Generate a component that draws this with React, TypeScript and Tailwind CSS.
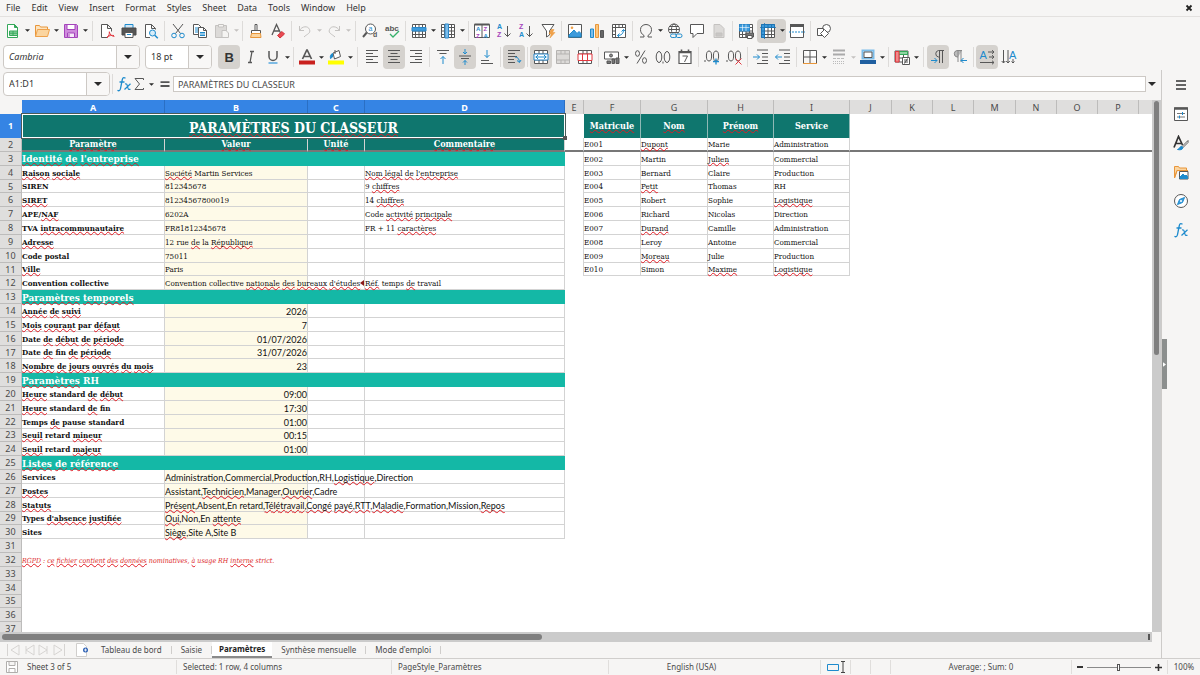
import React from "react";

const INK = "#575757";
const BLUE = "#1e8bcd";
const FAINT = "#c4c2c0";

/* ---------- icons, all drawn on a 16 x 16 grid ---------- */

const Svg = ({ children }: { children: React.ReactNode }) => (
  <svg viewBox="0 0 16 16" className="w-4 h-4 shrink-0" fill="none" stroke={INK} strokeWidth="1" aria-hidden="true">
    {children}
  </svg>
);

const Letter = ({ x, y, size, fill, bold, children }: { x: number; y: number; size: number; fill: string; bold?: boolean; children: string }) => (
  <text x={x} y={y} fontSize={size} fill={fill} stroke="none" fontFamily="Liberation Sans, sans-serif" fontWeight={bold ? 700 : 400}>
    {children}
  </text>
);

const grid = "M1.5 1.5h13v13h-13zM1.5 4.5h13M1.5 8h13M1.5 11.5h13M4.5 1.5v13M8 1.5v13M11.5 1.5v13";

const icons: Record<string, React.ReactNode> = {
  new: (
    <>
      <path d="M2.500 1.500h7l3 3v10h-10z" fill="#fff" stroke="#35a85a" />
      <path d="M9.500 1.500v3h3z" fill="#35a85a" stroke="#35a85a" />
      <path d="M4.500 8h8v4.500h-8z" fill="#8fd3a2" stroke="#35a85a" />
      <path d="M4.500 10.200h8M8 8v4.500" stroke="#35a85a" />
    </>
  ),
  open: (
    <>
      <path d="M1.500 13.500v-11h4l1 1.500h7v2" fill="#fde3bd" stroke="#e8963a" />
      <path d="M1.500 13.500l2-7h12l-2 7z" fill="#fbd5a0" stroke="#eea14b" />
    </>
  ),
  save: (
    <>
      <path d="M1.500 1.500h12l1 1v12h-13z" fill="#cf8bdd" stroke="#a444bb" />
      <path d="M4 1.500h8v5H4z" fill="#fff" stroke="#a444bb" />
      <path d="M4.500 10h7v4.500h-7z" fill="#f6eaf9" stroke="#a444bb" />
      <path d="M6 11v3" stroke="#a444bb" />
    </>
  ),
  pdf: (
    <>
      <path d="M8 14.500H2.500v-13h6l4 4v3M8.500 1.500v4h4" fill="#fff" />
      <path d="M8 15c2-2 2.500-4 2.300-6.500M10.400 9c.5 2.500 2 4 5 4.500M8 14c2-1.500 5-1.800 7-1.500" stroke="#e2373f" />
    </>
  ),
  print: (
    <>
      <path d="M4 5V1.500h8V5" fill="#cfe6f6" stroke={BLUE} />
      <path d="M1 5h14v7H1z" fill="#555" stroke="#4a4a4a" />
      <path d="M4 9.500h8v5H4z" fill="#fff" />
      <path d="M6 11.500h4" stroke={BLUE} />
    </>
  ),
  preview: (
    <>
      <path d="M7 14.500H2.500v-13h6l4 4v1M8.500 1.500v4h4" fill="#fff" />
      <circle cx="9.500" cy="10" r="3" fill="#d8edf9" stroke={BLUE} />
      <path d="M11.800 12.200l3 3" stroke={BLUE} strokeWidth="1.500" />
    </>
  ),
  cut: (
    <>
      <path d="M3 1l7.500 9.500M13 1L5.500 10.500" />
      <circle cx="4" cy="12.500" r="2.300" stroke={BLUE} />
      <circle cx="12" cy="12.500" r="2.300" stroke={BLUE} />
    </>
  ),
  copy: (
    <>
      <path d="M1.500 1.500h5l3 3v7h-8z" fill="#fff" />
      <path d="M3 5h4M3 7h4M3 9h3" stroke={BLUE} />
      <path d="M6.500 4.500h5l3 3v7h-8z" fill="#fff" />
      <path d="M11.500 4.500v3h3" />
      <path d="M8 9.500h5M8 11h5M8 12.500h5" stroke={BLUE} />
    </>
  ),
  paste: (
    <>
      <path d="M1.500 2.500h11v12h-11z" fill="#dcdad8" stroke={FAINT} />
      <path d="M4.500 1.500h5v2.500h-5z" fill="#f5f4f2" stroke={FAINT} />
      <path d="M8 7.500h4l2.500 2.500v4.500H8z" fill="#f5f4f2" stroke={FAINT} />
    </>
  ),
  brush: (
    <>
      <path d="M7 1.500h2v6H7z" fill="#fff" />
      <path d="M3.500 7.500h9v3h-9z" fill="#fff" />
      <path d="M3.500 10.500L2.500 14.500h10.500l-.500-4z" fill="#fbd5a0" stroke="#e8963a" />
    </>
  ),
  clear: (
    <>
      <path d="M2 12L6.500 1.500L10.500 10M3.500 8h5.500" strokeWidth="1.300" />
      <path d="M7.500 12.500l4.500-4 2.500 2.500-4.500 4z" fill="#e84a52" stroke="#d3323b" />
    </>
  ),
  undo: <path d="M2.500 3v4.500H7M2.500 7.500C5 3 11 2.500 12.500 6.500S10 11 7 14" stroke={FAINT} />,
  redo: <path d="M13.500 3v4.500H9M13.500 7.500C11 3 5 2.500 3.500 6.500S6 11 9 14" stroke={FAINT} />,
  find: (
    <>
      <circle cx="8.500" cy="6" r="5" fill="#fff" />
      <path d="M4.800 9.500L1 14" strokeWidth="2" />
      <Letter x={6.5} y={8.2} size={7} fill={BLUE}>a</Letter>
      <Letter x={11} y={14.4} size={7} fill={INK} bold>d</Letter>
    </>
  ),
  spell: (
    <>
      <Letter x={1} y={8} size={8} fill={INK} bold>abc</Letter>
      <path d="M6 11l3 3 6-6" stroke="#35b06a" strokeWidth="1.300" />
    </>
  ),
  row: (
    <>
      <path d={grid} fill="#fff" />
      <path d="M1 4.500h14V8H1z" fill="#3d9bdc" stroke="#2a87c9" />
    </>
  ),
  col: (
    <>
      <path d={grid} fill="#fff" />
      <path d="M5 1h3.500v14H5z" fill="#7cbdea" stroke="#2a87c9" />
    </>
  ),
  sort: (
    <>
      <path d="M.5 1.500h15v13H.5zM8 1.500v13" fill="#fff" />
      <path d="M.5 1.500h15" strokeWidth="2" />
      <Letter x={2} y={7.6} size={6} fill={BLUE} bold>A</Letter>
      <Letter x={2} y={14.5} size={6} fill="#a444bb" bold>Z</Letter>
      <Letter x={9.5} y={7.6} size={6} fill="#a444bb" bold>Z</Letter>
      <Letter x={9.5} y={14.5} size={6} fill={BLUE} bold>A</Letter>
    </>
  ),
  az: (
    <>
      <Letter x={1} y={6.4} size={7} fill={BLUE} bold>A</Letter>
      <Letter x={1} y={14.4} size={7} fill="#a444bb" bold>Z</Letter>
      <path d="M11.500 3v10.500M8.500 10.500l3 3 3-3" />
    </>
  ),
  za: (
    <>
      <Letter x={1} y={6.4} size={7} fill="#a444bb" bold>Z</Letter>
      <Letter x={1} y={14.4} size={7} fill={BLUE} bold>A</Letter>
      <path d="M11.500 3v10.500M8.500 10.500l3 3 3-3" />
    </>
  ),
  filter: (
    <>
      <path d="M2 1.500h12L9.500 8v4l-3 2V8z" fill="#fff" />
      <path d="M11 6.500h3l-1.500 3H15l-5 5.500 1.200-4H9z" fill="#f0a14a" stroke="#e8963a" strokeWidth=".5" />
    </>
  ),
  image: (
    <>
      <path d="M1.500 1.500h13v13h-13z" fill="#fff" />
      <path d="M2 14v-2l5-5 3 3.500 2-2 2 2V14z" fill="#3d9bdc" stroke={BLUE} />
      <circle cx="5" cy="4.800" r="1.300" fill="#f0a14a" stroke="none" />
    </>
  ),
  chart: (
    <>
      <path d="M1.500 6h3v8.500h-3z" fill="#7cbdea" stroke={BLUE} />
      <path d="M6.500 1.500h3v13h-3z" fill="#fbc77f" stroke="#e8963a" />
      <path d="M11.500 7.500h3v7h-3z" fill="#666" />
    </>
  ),
  pivot: (
    <>
      <path d="M1.500 1.500h13v13h-13zM1.500 4.500h13M4.500 1.500v13M8 1.500v3M11.500 1.500v3M1.500 8h3M1.500 11.500h3" fill="#fff" />
      <path d="M6.500 12.500c4 0 6-2 6-6M8.500 10.500l-2 2 2 2M10.500 8.500l2-2 2 2" stroke={BLUE} />
    </>
  ),
  omega: <path d="M2 14h4v-1.500C3.500 11 2.500 9 2.500 6.500 2.500 3.500 5 1.500 8 1.500s5.500 2 5.500 5c0 2.500-1 4.500-3.500 6V14h4" />,
  link: (
    <>
      <circle cx="7" cy="6.500" r="5.500" fill="#fff" />
      <ellipse cx="7" cy="6.500" rx="2.500" ry="5.500" />
      <path d="M1.500 6.500h11M2.500 3.500h9M2.500 9.500h9" />
      <path d="M3 10.500h12v5H3z" fill="#f5f4f2" stroke="none" />
      <rect x="3.500" y="11" width="6" height="3.500" rx="1.700" stroke={BLUE} />
      <rect x="9" y="11" width="6" height="3.500" rx="1.700" stroke={BLUE} />
    </>
  ),
  comment: <path d="M1.500 1.500h13v9H8l-4 4v-4H1.500z" fill="#fff" />,
  headers: (
    <>
      <path d="M3 1.500h6l4 4v9H3z" fill="#dcdad8" stroke={FAINT} />
      <path d="M5 10h6v3H5z" fill="#c9c7c5" stroke={FAINT} />
    </>
  ),
  printarea: (
    <>
      <path d={grid} fill="#fff" />
      <path d="M1.500 1.500h10v6.500h-10z" fill="#3d9bdc" stroke="#2a87c9" />
      <path d="M1.500 4.500h10M4.500 1.500V8M8 1.500V8" stroke="#fff" strokeWidth=".6" />
      <path d="M8 10h7.500v4H8z" fill="#777" />
      <path d="M9.500 12.500h4.500v3H9.500z" fill="#fff" />
    </>
  ),
  freeze: (
    <>
      <path d={grid} fill="#fff" />
      <path d="M1.500 1.500h13v3h-10v10h-3z" fill="#3d9bdc" stroke="#1d74b4" />
      <path d="M1.500 8h3M1.500 11.500h3M8 1.500v3M11.500 1.500v3" stroke="#1d74b4" />
      <path d="M4.500 0v16M0 4.500h16" stroke="#1d74b4" strokeWidth=".8" />
    </>
  ),
  split: (
    <>
      <path d="M1.500 2.500h13v12h-13z" fill="#fff" />
      <path d="M1 2.500h14" strokeWidth="3" />
      <path d="M0 9h16" stroke={BLUE} strokeDasharray="2 1" />
    </>
  ),
  shapes: (
    <>
      <circle cx="10.500" cy="5.500" r="4" fill="#fff" />
      <path d="M1.500 5.500h6v7h-6z" fill="#fff" />
      <path d="M8.500 6.500l4 4-4 4-4-4z" fill="#fff" />
    </>
  ),
  bold: <Letter x={3.5} y={12.8} size={13} fill="#333" bold>B</Letter>,
  italic: <path d="M7 2.500h4M5 13.500h4M9 2.500L7 13.500" strokeWidth="1.300" />,
  underline: (
    <>
      <path d="M4 2v5.500a4 4 0 0 0 8 0V2" strokeWidth="1.500" />
      <path d="M3.500 14h9" stroke="#3d9bdc" strokeWidth="1.300" />
    </>
  ),
  color: (
    <>
      <path d="M3.500 10L7.800 1h.4L12.500 10M5 7.500h6" strokeWidth="1.700" />
      <path d="M0 13.500h16" stroke="#c9211e" strokeWidth="4" />
    </>
  ),
  fill: (
    <>
      <path d="M5 4l6-2.500 1.500 6L6.500 10z" fill="#fff" />
      <path d="M7 1v4" />
      <path d="M4.500 4.500c-2 1-2.500 2.500-2 5l2-1.500z" fill={BLUE} stroke={BLUE} />
      <path d="M0 13.500h16" stroke="#ffff00" strokeWidth="4" />
    </>
  ),
  left: <path d="M2 1.500h12M2 4.500h7M2 7.500h12M2 10.500h7M2 13.500h12" />,
  center: <path d="M2 1.500h12M4.500 4.500h7M2 7.500h12M4.500 10.500h7M2 13.500h12" />,
  right: <path d="M2 1.500h12M7 4.500h7M2 7.500h12M7 10.500h7M2 13.500h12" />,
  top: (
    <>
      <path d="M2 1.500h12M4.500 4.500h7" />
      <path d="M8 15V7.500M5.500 10L8 7.500 10.500 10" stroke={BLUE} />
    </>
  ),
  middle: (
    <>
      <path d="M2 7h12M4 9.500h8" />
      <path d="M8 0v5M6 3l2 2 2-2M8 16v-4.500M6 13.500l2-2 2 2" stroke={BLUE} />
    </>
  ),
  bottom: (
    <>
      <path d="M2 14.500h12M2 11.500h8" />
      <path d="M8 1v7.500M5.500 6L8 8.500 10.500 6" stroke={BLUE} />
    </>
  ),
  wrap: (
    <>
      <path d="M2 1.500h12M2 4.500h7M2 7.500h9M2 10.500h6M2 13.500h7" />
      <path d="M9 8c3 0 4 2 4.500 5M11 11.500l2.500 2 1.500-2.500" stroke={BLUE} />
    </>
  ),
  merge: (
    <>
      <path d="M1.500 1.500h13v13h-13zM1.500 5h13M1.500 11h13M6 1.500V5M10 1.500V5M6 11v3.500M10 11v3.500" fill="#fff" />
      <path d="M1 5h14v6H1z" fill="#fff" stroke="#2a87c9" />
      <path d="M2.500 8h11M5 6L3 8l2 2M11 6l2 2-2 2" stroke={BLUE} />
    </>
  ),
  mergeOff: <path d="M1.500 1.500h13v13h-13zM1.500 5h13M1.500 11h13M6 1.500V5M10 1.500V5M6 11v3.500M10 11v3.500" fill="#dcdad8" stroke="#b5b3b1" />,
  unmerge: (
    <>
      <path d="M1.500 1.500h13v13h-13zM1.500 5h13M1.500 11h13M6 1.500V5M10 1.500V5M6 11v3.500M10 11v3.500" fill="#fff" />
      <path d="M1 5h14v6.500H1zM5.500 5v6.500M10.500 5v6.500" fill="#fff" stroke="#e2373f" />
    </>
  ),
  currency: (
    <>
      <path d="M.5 3h14v7H.5z" fill="#fff" />
      <circle cx="7" cy="6.500" r="1.500" fill="#888" />
      <path d="M3 12h3.500v2.500H3zM8 10h2.500v4.500H8zM12 9h3v5.500h-3z" fill="#777" />
    </>
  ),
  percent: (
    <>
      <ellipse cx="4.500" cy="4.500" rx="2" ry="2.800" />
      <ellipse cx="11.500" cy="11.500" rx="2" ry="2.800" />
      <path d="M12 1.500L4 14.500" />
    </>
  ),
  number: (
    <>
      <ellipse cx="4" cy="8" rx="2.800" ry="5.500" />
      <ellipse cx="12" cy="8" rx="2.800" ry="5.500" />
      <path d="M8 12.500v2" />
    </>
  ),
  date: (
    <>
      <path d="M2 2.500h12v12H2z" fill="#fff" strokeWidth="1.200" />
      <path d="M2 3.500h12M4.500.5v3M11.500.5v3" strokeWidth="1.600" />
      <path d="M5.500 7h5L7.500 13" />
    </>
  ),
  addDec: (
    <>
      <ellipse cx="5" cy="7" rx="2.600" ry="5" />
      <ellipse cx="12" cy="7" rx="2.600" ry="5" />
      <path d="M1 11v2" />
      <path d="M12 9.500v6M9 12.500h6" stroke={BLUE} strokeWidth="1.300" />
    </>
  ),
  delDec: (
    <>
      <ellipse cx="5" cy="7" rx="2.600" ry="5" />
      <ellipse cx="12" cy="7" rx="2.600" ry="5" />
      <path d="M1 11v2" />
      <path d="M9.500 9.500l6 6M15.500 9.500l-6 6" stroke="#e2373f" />
    </>
  ),
  indent: (
    <>
      <path d="M4 1h11M9 4.500h6M9 8h6M9 11.500h6M4 14.500h11" />
      <path d="M0 8h6.500M4 5.500L6.500 8 4 10.500" stroke={BLUE} />
    </>
  ),
  outdent: (
    <>
      <path d="M4 1h11M9 4.500h6M9 8h6M9 11.500h6M4 14.500h11" />
      <path d="M7 8H.5M3 5.500L.5 8 3 10.500" stroke={BLUE} />
    </>
  ),
  border: (
    <>
      <path d="M1.500 1.500h13v13M1.500 1.500v13M8 1.500v13M1.500 8h13" fill="#fff" />
      <path d="M1 14.500h14" stroke="#e8963a" />
    </>
  ),
  lines: (
    <>
      <path d="M2 1.500h12M2 5.500h12" stroke="#aaa" strokeWidth="2" />
      <path d="M2 9.500h12" stroke="#bbb" strokeDasharray="3 1" />
      <path d="M2 12.500h12M2 14.500h12" stroke="#bbb" strokeDasharray="1 1" />
    </>
  ),
  borderColor: (
    <>
      <path d="M2.500 1.500h11v8h-11z" fill="#fff" stroke="#7cbdea" strokeWidth="2" />
      <path d="M4 3h8v5.500H4z" stroke="#555" />
      <path d="M0 13h16" stroke="#1f5fa0" strokeWidth="4" />
    </>
  ),
  cond: (
    <>
      <path d="M1 2h13v11H1zM1 5.500h13M1 9h13M5 2v11M9.500 2v11" fill="#fff" />
      <path d="M5 2.500h8.500v3H5z" fill="#8fd3a2" stroke="#35a85a" />
      <path d="M1.500 2.500H5V13H1.500z" fill="#f08a8a" stroke="#e2373f" />
      <path d="M8.500 8.500h7v7h-7z" fill="#fff" />
      <path d="M10 11h4M10 13h4M13.500 9.500l-3 5" />
    </>
  ),
  ltr: (
    <>
      <path d="M14 1.500H8.500a3.300 3.300 0 0 0 0 6.500h1M9.500 1.500v12.500M12.500 1.500v12.500" />
      <path d="M1 11.500h6M4.500 9L7 11.500 4.500 14" stroke={BLUE} />
    </>
  ),
  rtl: (
    <>
      <path d="M10 1.500H5a3.300 3.300 0 0 0 0 6.500h1" fill="#bbb" stroke="#888" />
      <path d="M6 1.500v11.500M9 1.500v11.500" stroke="#888" />
      <path d="M15 11.500H9M11.500 9L9 11.500l2.500 2.500" stroke={BLUE} />
    </>
  ),
  horiz: (
    <>
      <Letter x={0.5} y={10} size={11} fill={BLUE}>A</Letter>
      <path d="M9 3h6M13 1.200L15 3l-2 1.800M10 8h5M13 6.200L15 8l-2 1.800M1 13.500h14M13 11.700l2 1.800-2 1.800" />
    </>
  ),
  vert: (
    <>
      <Letter x={8} y={10} size={11} fill={BLUE}>A</Letter>
      <path d="M2.500 1v13M.7 12l1.800 2 1.800-2M7 1v13M5.200 12L7 14l1.800-2M12 10v4M10.500 12.500L12 14l1.500-1.500" />
    </>
  ),
  burger: <path d="M3 4h10M3 8h10M3 12h10" stroke="#333" strokeWidth="1.500" />,
  props: (
    <>
      <path d="M1.500 2h13v12.500h-13z" fill="#fff" />
      <path d="M1 2.500h14" strokeWidth="2.500" />
      <path d="M4 7.500h8M4 11h8" stroke="#777" />
      <path d="M9.500 6v3M6.500 9.500v3" stroke={BLUE} />
    </>
  ),
  styles: (
    <>
      <path d="M1 12.500L5.500 1.500 9.500 10M2.500 8.500h6" strokeWidth="1.700" stroke="#333" />
      <path d="M15 5.500l-6 6 1 1 5-5z" fill="#fff" />
      <path d="M4.500 14.500c2.500.5 5 .5 5.500-2l-1.500-1.200c-2 .2-1.500 2.700-4 3.200z" fill={BLUE} stroke={BLUE} />
    </>
  ),
  gallery: (
    <>
      <path d="M1.500 14V2.500h4l1 1.500h7v2.500H4z" fill="#fbd5a0" stroke="#e8963a" />
      <path d="M1.500 14l2.500-7.500h11" stroke="#e8963a" />
      <path d="M6.500 7.500h8.500v7.500H6.500z" fill="#fff" />
      <path d="M7 14.500V13l3-3 2 2 1-1 1.500 1.500v2z" fill={BLUE} stroke={BLUE} />
    </>
  ),
  navigator: (
    <>
      <circle cx="8" cy="8" r="6.500" fill="#fff" />
      <path d="M11.500 4.500L9.500 9.500l-5 2 2-5z" fill="#3d9bdc" stroke={BLUE} />
      <circle cx="8" cy="8" r="1" fill="#fff" stroke="none" />
    </>
  ),
  fx: (
    <>
      <path d="M9.500 2.200C7.500.8 6.600 2 6.200 4L4.500 12.500C4.200 14.500 3 15.300 1.500 14.300M3.500 6h5" stroke={BLUE} strokeWidth="1.300" />
      <path d="M9 8c1.500-.5 2 0 2.500 2.500S12.500 14 14.500 13.200M14.500 7.800L8.500 13.500" stroke={BLUE} strokeWidth="1.200" />
    </>
  ),
  sigma: <path d="M12.500 4V2.500H4L8.500 8 4 13.500h8.500V12" />,
  equals: <path d="M3.500 6.200h9M3.500 10h9" stroke="#555" strokeWidth="1.800" />,
  disk: (
    <>
      <path d="M2.500 2.500h11v11h-11zM5 2.500v4h6v-4M5 13.500v-4h6v4" fill="#fff" stroke="#b0aeac" />
    </>
  ),
};

/* ---------- toolbars ---------- */

type Tool = { icon: string; label: string; menu?: boolean; on?: boolean } | "sep" | "widesep";

const standardBar: Tool[] = [
  { icon: "new", label: "New", menu: true },
  { icon: "open", label: "Open", menu: true },
  { icon: "save", label: "Save", menu: true },
  "widesep",
  { icon: "pdf", label: "Export as PDF" },
  { icon: "print", label: "Print" },
  { icon: "preview", label: "Print Preview" },
  "sep",
  { icon: "cut", label: "Cut" },
  { icon: "copy", label: "Copy" },
  { icon: "paste", label: "Paste", menu: true },
  "sep",
  { icon: "brush", label: "Clone Formatting" },
  { icon: "clear", label: "Clear Formatting" },
  "sep",
  { icon: "undo", label: "Undo", menu: true },
  { icon: "redo", label: "Redo", menu: true },
  "widesep",
  { icon: "find", label: "Find and Replace" },
  { icon: "spell", label: "Spelling" },
  "sep",
  { icon: "row", label: "Row", menu: true },
  { icon: "col", label: "Column", menu: true },
  "sep",
  { icon: "sort", label: "Sort" },
  { icon: "az", label: "Sort Ascending" },
  { icon: "za", label: "Sort Descending" },
  { icon: "filter", label: "AutoFilter" },
  "sep",
  { icon: "image", label: "Insert Image" },
  { icon: "chart", label: "Insert Chart" },
  { icon: "pivot", label: "Insert Pivot Table" },
  "sep",
  { icon: "omega", label: "Special Character", menu: true },
  { icon: "link", label: "Insert Hyperlink" },
  { icon: "comment", label: "Insert Comment" },
  { icon: "headers", label: "Headers and Footers" },
  "sep",
  { icon: "printarea", label: "Define Print Area" },
  { icon: "freeze", label: "Freeze Rows and Columns", menu: true, on: true },
  { icon: "split", label: "Split Window" },
  "sep",
  { icon: "shapes", label: "Show Draw Functions" },
];

const formatBar: Tool[] = [
  { icon: "bold", label: "Bold", on: true },
  { icon: "italic", label: "Italic" },
  { icon: "underline", label: "Underline", menu: true },
  "sep",
  { icon: "color", label: "Font Color", menu: true },
  { icon: "fill", label: "Background Color", menu: true },
  "widesep",
  { icon: "left", label: "Align Left" },
  { icon: "center", label: "Center Horizontally", on: true },
  { icon: "right", label: "Align Right" },
  "sep",
  { icon: "top", label: "Align Top" },
  { icon: "middle", label: "Center Vertically", on: true },
  { icon: "bottom", label: "Align Bottom" },
  "sep",
  { icon: "wrap", label: "Wrap Text", on: true },
  "sep",
  { icon: "merge", label: "Merge and Center", on: true },
  { icon: "mergeOff", label: "Merge Cells" },
  { icon: "unmerge", label: "Unmerge Cells" },
  "sep",
  { icon: "currency", label: "Format as Currency", menu: true },
  { icon: "percent", label: "Format as Percent" },
  { icon: "number", label: "Format as Number" },
  { icon: "date", label: "Format as Date" },
  "sep",
  { icon: "addDec", label: "Add Decimal Place" },
  { icon: "delDec", label: "Delete Decimal Place" },
  "sep",
  { icon: "indent", label: "Increase Indent" },
  { icon: "outdent", label: "Decrease Indent" },
  "sep",
  { icon: "border", label: "Borders", menu: true },
  { icon: "lines", label: "Border Style", menu: true },
  { icon: "borderColor", label: "Border Color", menu: true },
  "sep",
  { icon: "cond", label: "Conditional", menu: true },
  "widesep",
  { icon: "ltr", label: "Left-To-Right", on: true },
  { icon: "rtl", label: "Right-To-Left" },
  "sep",
  { icon: "horiz", label: "Text direction from left to right", on: true },
  { icon: "vert", label: "Text direction from top to bottom" },
];

const Caret = ({ big, faint }: { big?: boolean; faint?: boolean }) => (
  <svg viewBox="0 0 8 4" className={big ? "w-2 h-1" : "w-[5px] h-[3px]"} fill={faint ? FAINT : "#2b2b2b"} aria-hidden="true">
    <path d="M0 0h8L4 4z" />
  </svg>
);

const faintMenus = ["paste", "undo", "redo", "lines"];

const Tools = ({ items }: { items: Tool[] }) => (
  <>
    {items.map((t, i) => {
      if (t === "sep" || t === "widesep")
        return (
          <span key={i} className={`${t === "sep" ? "w-[5px]" : "w-[7px]"} h-5 shrink-0 flex justify-center`}>
            <span className="w-px h-full bg-[#dddbd9]" />
          </span>
        );
      return (
        <span key={i} className={`flex shrink-0 h-6 rounded ${t.on ? "bg-[#d5d2ce]" : ""}`}>
          <button aria-label={t.label} className="w-[22px] flex items-center justify-center">
            <Svg>{icons[t.icon]}</Svg>
          </button>
          {t.menu && (
            <button aria-label={`${t.label} options`} className="w-[7px] flex items-center justify-center">
              <Caret faint={faintMenus.includes(t.icon)} />
            </button>
          )}
        </span>
      );
    })}
  </>
);

const Combo = ({ label, value, box, italic }: { label: string; value: string; box: string; italic?: boolean }) => (
  <div className={`${box} h-6 shrink-0 flex rounded border border-[#cdc9c5] bg-white overflow-hidden`}>
    <input
      aria-label={label}
      defaultValue={value}
      className={`flex-1 min-w-0 px-[5px] text-[9px] outline-none ${italic ? "italic" : ""}`}
    />
    <button aria-label={`${label} list`} className="w-[23px] flex items-center justify-center border-l border-[#cdc9c5] bg-[#f8f7f6]">
      <Caret big />
    </button>
  </div>
);

/* ---------- sheet data; words in [brackets] carry the spelling mark ---------- */

type Row = { section?: string; a?: string; b?: string; d?: string; num?: boolean; sans?: boolean; cut?: boolean };

const params: Record<number, Row> = {
  3: { section: "[Identité] [de] [l'entreprise]" },
  4: { a: "[Raison] [sociale]", b: "[Société] Martin Services", d: "[Nom légal] [de] [l'entreprise]" },
  5: { a: "SIREN", b: "812345678", d: "9 [chiffres]" },
  6: { a: "[SIRET]", b: "81234567800019", d: "14 [chiffres]" },
  7: { a: "APE/[NAF]", b: "6202A", d: "Code [activité] [principale]" },
  8: { a: "TVA [intracommunautaire]", b: "FR81812345678", d: "FR + 11 [caractères]" },
  9: { a: "[Adresse]", b: "12 rue [de] la [République]" },
  10: { a: "Code postal", b: "75011" },
  11: { a: "[Ville]", b: "Paris" },
  12: { a: "Convention collective", b: "Convention collective [nationale] [des] [bureaux] [d'études]", d: "[Réf.] temps [de] travail", cut: true },
  13: { section: "[Paramètres] [temporels]" },
  14: { a: "[Année] [de] [suivi]", b: "2026", num: true },
  15: { a: "[Mois] [courant] par [défaut]", b: "7", num: true },
  16: { a: "Date [de] [début] [de] [période]", b: "01/07/2026", num: true },
  17: { a: "Date [de] fin [de] [période]", b: "31/07/2026", num: true },
  18: { a: "[Nombre] [de] [jours] [ouvrés] [du] [mois]", b: "23", num: true },
  19: { section: "[Paramètres] RH" },
  20: { a: "[Heure] standard [de] [début]", b: "09:00", num: true },
  21: { a: "[Heure] standard [de] fin", b: "17:30", num: true },
  22: { a: "Temps [de] pause standard", b: "01:00", num: true },
  23: { a: "[Seuil] retard [mineur]", b: "00:15", num: true },
  24: { a: "[Seuil] retard [majeur]", b: "01:00", num: true },
  25: { section: "[Listes] [de] [référence]" },
  26: { a: "Services", b: "Administration,Commercial,Production,RH,[Logistique],Direction", sans: true },
  27: { a: "[Postes]", b: "Assistant,[Technicien],Manager,[Ouvrier],Cadre", sans: true },
  28: { a: "[Statuts]", b: "[Présent],Absent,En retard,[Télétravail],[Congé] [payé],[RTT],[Maladie],Formation,Mission,[Repos]", sans: true },
  29: { a: "Types [d'absence] [justifiée]", b: "[Oui],Non,En [attente]", sans: true },
  30: { a: "Sites", b: "[Siège],Site A,Site B", sans: true },
};

const staff = [
  ["E001", "[Dupont]", "Marie", "Administration"],
  ["E002", "Martin", "[Julien]", "Commercial"],
  ["E003", "Bernard", "Claire", "Production"],
  ["E004", "[Petit]", "Thomas", "RH"],
  ["E005", "Robert", "Sophie", "[Logistique]"],
  ["E006", "Richard", "Nicolas", "Direction"],
  ["E007", "[Durand]", "Camille", "Administration"],
  ["E008", "Leroy", "Antoine", "Commercial"],
  ["E009", "[Moreau]", "Julie", "Production"],
  ["E010", "Simon", "[Maxime]", "[Logistique]"],
];

const colWidths = [
  "w-[22px]", "w-[143px]", "w-[143px]", "w-[57px]", "w-[200px]", "w-[19px]", "w-[57px]", "w-[67px]", "w-[66px]",
  "w-[76px]", "w-[42px]", "w-[41px]", "w-[41px]", "w-[42px]", "w-[41px]", "w-[41px]", "w-[41px]", "",
];

const Spell = ({ text }: { text: string }) => (
  <>
    {text.split(/(\[[^\]]+\])/).map((part, i) =>
      part.startsWith("[") ? (
        <span key={i} className="underline decoration-wavy decoration-[#e01b24] decoration-1 underline-offset-0 [text-decoration-skip-ink:none]">
          {part.slice(1, -1)}
        </span>
      ) : (
        part
      )
    )}
  </>
);

const serif = "font-['DejaVu_Serif_Condensed','DejaVu_Serif',serif]";
const cell = "border-r border-b border-[#d3d3d3] align-bottom";
const green = "bg-[#0f766e] text-white text-[9px] font-bold text-center";

const RowHead = ({ n }: { n: number }) => (
  <th
    scope="row"
    className={`border-r border-b text-center align-middle font-['Noto_Sans',sans-serif] text-[9px] ${
      n === 1 ? "bg-[#3584e4] border-[#3584e4] text-white font-bold" : "bg-[#dfdedd] border-[#bdbcbb] text-[#4a4a4a] font-normal"
    }`}
  >
    {n}
  </th>
);

const StaffCells = ({ n }: { n: number }) => {
  const person = staff[n - 2];
  if (!person) return <td colSpan={13} />;
  return (
    <>
      <td className="border-r border-[#d3d3d3]" />
      {person.map((v, i) => (
        <td key={i} className={cell}>
          <Spell text={v} />
        </td>
      ))}
      <td colSpan={8} />
    </>
  );
};

const SheetRow = ({ n }: { n: number }) => {
  const r = params[n];
  if (!r)
    return (
      <tr>
        <RowHead n={n} />
        <td colSpan={17} className="align-bottom">
          {n === 32 && (
            <span className="text-[7px] italic text-[#dc2626]">
              <Spell text="[RGPD] : [ce] [fichier] [contient] [des] [données] nominatives, [à] usage RH [interne] strict." />
            </span>
          )}
        </td>
      </tr>
    );
  return (
    <tr>
      <RowHead n={n} />
      {r.section ? (
        <td colSpan={4} className="bg-[#14b8a6] align-middle text-white text-[10px] font-bold">
          <Spell text={r.section} />
        </td>
      ) : (
        <>
          <td className={`${cell} font-bold`}>
            <Spell text={r.a || ""} />
          </td>
          <td className={`${cell} bg-[#fefae8] ${r.num ? "text-right" : ""} ${r.num || r.sans ? "font-[Lato,sans-serif] text-[9px]" : ""}`}>
            <Spell text={r.b || ""} />
            {r.cut && (
              <svg viewBox="0 0 4 6" className="inline w-1 h-[6px] align-baseline" aria-hidden="true">
                <path d="M0 3l4-3v6z" fill="#8b1a1a" />
              </svg>
            )}
          </td>
          <td className={cell} />
          <td className={cell}>
            <Spell text={r.d || ""} />
          </td>
        </>
      )}
      <StaffCells n={n} />
    </tr>
  );
};

const Sheet = () => (
  <table className={`w-full h-[calc(100%+4px)] table-fixed border-separate border-spacing-0 bg-white text-[8px] leading-[11px] text-[#111] whitespace-nowrap ${serif}`}>
    <colgroup>
      {colWidths.map((w, i) => (
        <col key={i} className={w} />
      ))}
    </colgroup>
    <thead>
      <tr className="h-[14px] font-['Noto_Sans',sans-serif]">
        <td className="bg-[#f6f5f4]" />
        {"ABCDEFGHIJKLMNOP".split("").map((c, i) => (
          <th
            key={c}
            scope="col"
            className={`border-r text-[9px] ${
              i < 4 ? "bg-[#3584e4] border-[#2a6fc4] text-white font-bold" : "bg-[#dfdedd] border-[#bdbcbb] text-[#4a4a4a] font-normal"
            }`}
          >
            {c}
          </th>
        ))}
        <td className="bg-[#dfdedd]" />
      </tr>
    </thead>
    <tbody>
      <tr className="h-[24px]">
        <RowHead n={1} />
        <td colSpan={4} className="relative bg-[#0f766e] text-white text-[14px] leading-[16px] font-bold text-center align-bottom pb-[2px]">
          <Spell text="[PARAMÈTRES] DU [CLASSEUR]" />
          {/* selection frame and fill handle */}
          <span className="absolute inset-0 border border-white outline outline-[#4a5a58] outline-offset-0" />
          <span className="absolute -right-[2px] -bottom-[2px] w-1 h-1 bg-[#555]" />
        </td>
        <td />
        {["[Matricule]", "[Nom]", "[Prénom]", "Service"].map((h) => (
          <td key={h} className={`${green} align-middle border-r border-[#8fb9b5]`}>
            <Spell text={h} />
          </td>
        ))}
        <td colSpan={8} />
      </tr>
      <tr className="h-[14px] [&>td]:border-b-2 [&>td]:border-b-[#777]">
        <RowHead n={2} />
        {["[Paramètre]", "[Valeur]", "[Unité]", "[Commentaire]"].map((h) => (
          <td key={h} className={`${green} align-bottom border-r border-r-[#d3d3d3]`}>
            <Spell text={h} />
          </td>
        ))}
        <StaffCells n={2} />
      </tr>
      {Array.from({ length: 35 }, (_, i) => (
        <SheetRow key={i} n={i + 3} />
      ))}
    </tbody>
  </table>
);

/* ---------- window ---------- */

const menus = ["File", "Edit", "View", "Insert", "Format", "Styles", "Sheet", "Data", "Tools", "Window", "Help"];
const tabs = ["Tableau de bord", "Saisie", "Paramètres", "Synthèse mensuelle", "Mode d'emploi"];
const sidebar = [
  ["burger", "Sidebar Settings"],
  ["props", "Properties"],
  ["styles", "Styles"],
  ["gallery", "Gallery"],
  ["navigator", "Navigator"],
  ["fx", "Functions"],
];

const FormulaBar = () => (
  <div className="h-[30px] pb-[2px] pl-[3px] pr-[3px] shrink-0 flex items-center">
    <Combo label="Name Box" value="A1:D1" box="w-[107px]" />
    <span className="w-[5px] h-5 flex justify-center">
      <span className="w-px bg-[#dddbd9]" />
    </span>
    <button aria-label="Function Wizard" className="w-[18px] flex justify-center">
      <Svg>{icons.fx}</Svg>
    </button>
    <button aria-label="Select Function" className="w-3 flex justify-center">
      <Svg>{icons.sigma}</Svg>
    </button>
    <button aria-label="Function list" className="w-3 h-4 flex items-center justify-center">
      <Caret />
    </button>
    <button aria-label="Formula" className="w-4 flex justify-center">
      <Svg>{icons.equals}</Svg>
    </button>
    <input
      aria-label="Input line"
      defaultValue="PARAMÈTRES DU CLASSEUR"
      className="flex-1 min-w-0 h-4 px-1 bg-white border border-[#cdc9c5] text-[9px] text-[#4a4a4a] outline-none"
    />
    <button aria-label="Expand Formula Bar" className="w-3 h-4 flex items-center justify-center">
      <Caret big />
    </button>
  </div>
);

const TabBar = () => (
  <div className="h-4 shrink-0 flex items-center text-[8px] text-[#4a4a4a]">
    <div className="w-[72px] pl-[6px] flex">
      {["M1.500 1v12M13 2L5 7l8 5z", "M13 2L5 7l8 5zM5 3v8", "M3 2l8 5-8 5zM11 3v8", "M13.500 1v12M3 2l8 5-8 5z"].map((d, i) => (
        <button key={i} aria-label={["First sheet", "Previous sheet", "Next sheet", "Last sheet"][i]} className="w-[15px]">
          <svg viewBox="0 0 15 14" className="w-[15px] h-[14px]" fill="none" stroke="#d6d4d2" aria-hidden="true">
            <path d={d} />
          </svg>
        </button>
      ))}
    </div>
    <button aria-label="Add Sheet" className="w-5 flex justify-center">
      <svg viewBox="0 0 14 14" className="w-[14px] h-[14px]" fill="#fff" stroke="#d0cecc" aria-hidden="true">
        <path d="M1.500.5h7l3 3v10h-10z" />
        <circle cx="10.500" cy="7" r="2.500" fill="#2f62b5" stroke="none" />
        <path d="M9 7h3M10.500 5.500v3" stroke="#fff" strokeWidth=".8" />
      </svg>
    </button>
    <div role="tablist" className="flex h-full items-center">
      {tabs.map((t) =>
        t === "Paramètres" ? (
          <button key={t} role="tab" aria-selected="true" className="h-full px-[7px] bg-white border-b-2 border-[#8a8a8a] font-bold text-[#222]">
            {t}
          </button>
        ) : (
          <button key={t} role="tab" aria-selected="false" className="h-2 pl-[9px] pr-[9px] border-r border-[#cfcdcb] leading-[8px]">
            {t}
          </button>
        )
      )}
    </div>
  </div>
);

const StatusBar = () => (
  <footer className="h-[17px] shrink-0 flex items-center border-t border-[#d0cecc] text-[8px] text-[#4a4a4a] whitespace-nowrap [&>*]:h-[14px] [&>*]:flex [&>*]:items-center [&>*]:border-[#e0dedc]">
    <div className="w-[177px] pl-1 gap-[7px] border-r">
      <Svg>{icons.disk}</Svg>
      Sheet 3 of 5
    </div>
    <div className="w-[215px] px-[6px] border-r">Selected: 1 row, 4 columns</div>
    <div className="w-[217px] px-[6px] border-r">PageStyle_Paramètres</div>
    <div className="flex-1 justify-center border-r pr-[46px]">English (USA)</div>
    <div className="w-[30px] justify-center border-r">
      <svg viewBox="0 0 20 14" className="w-5 h-[14px]" fill="none" aria-hidden="true">
        <path d="M1.500 4.500h11v6h-11z" stroke={BLUE} />
        <path d="M15 1.500h4M17 1.500v11M15 12.500h4" stroke="#444" />
      </svg>
    </div>
    <div className="w-5 border-r" />
    <div className="w-5 border-r" />
    <div className="w-[181px] justify-center border-r">Average: ; Sum: 0</div>
    <div className="w-24 justify-center gap-1 border-r">
      <button aria-label="Zoom Out" className="w-[6px] h-[2px] bg-[#333]" />
      <input
        type="range"
        aria-label="Zoom"
        min={0}
        max={100}
        defaultValue={49}
        className="w-16 h-px appearance-none bg-[#8a8a8a] [&::-webkit-slider-thumb]:appearance-none [&::-webkit-slider-thumb]:w-[3px] [&::-webkit-slider-thumb]:h-[7px] [&::-webkit-slider-thumb]:bg-white [&::-webkit-slider-thumb]:border [&::-webkit-slider-thumb]:border-[#555]"
      />
      <button aria-label="Zoom In" className="w-[7px]">
        <svg viewBox="0 0 7 7" className="w-[7px] h-[7px]" stroke="#333" strokeWidth="1.600" aria-hidden="true">
          <path d="M3.500 0v7M0 3.500h7" />
        </svg>
      </button>
    </div>
    <div className="w-8 justify-center">100%</div>
  </footer>
);

const App = () => {
  return (
    <div className="h-screen flex flex-col overflow-hidden bg-[#f6f5f4] text-[#333] font-['Noto_Sans',sans-serif]">
      {/* menu bar */}
      <header className="h-[17px] shrink-0 flex items-center gap-[11px] pl-[6px] pr-[7px] border-b border-[#e3e1df] text-[9px]">
        {menus.map((m) => (
          <button key={m}>{m}</button>
        ))}
        <button aria-label="Close Document" className="ml-auto">
          <svg viewBox="0 0 8 8" className="w-2 h-2" stroke="#222" strokeWidth="1.800" aria-hidden="true">
            <path d="M1.500 1.500l5 5M6.500 1.500l-5 5" />
          </svg>
        </button>
      </header>
      <div className="h-[27px] shrink-0 flex items-center pl-[2px]">
        <Tools items={standardBar} />
      </div>
      <div className="h-[26px] shrink-0 flex items-center pl-[3px]">
        <Combo label="Font Name" value="Cambria" box="w-[137px]" italic />
        <span className="w-[5px]" />
        <Combo label="Font Size" value="18 pt" box="w-[67px]" />
        <span className="w-[6px]" />
        <Tools items={formatBar} />
      </div>

      <div className="flex-1 min-h-0 flex">
        <main className="flex-1 min-w-0 flex flex-col">
          <FormulaBar />
          <div className="flex-1 min-h-0 flex">
            <div className="flex-1 min-w-0 h-full overflow-hidden">
              <Sheet />
            </div>
            {/* vertical scroll bar */}
            <div className="w-[9px] p-[2px] pt-px bg-[#cbcbcb]">
              <div className="h-[48%] rounded-full bg-[#7f7f7f]" />
            </div>
          </div>
          <div className="h-[10px] mr-[9px] px-[2px] py-[2px] shrink-0 flex justify-between bg-[#cbcbcb]">
            <div className="w-[47%] rounded-full bg-[#7f7f7f]" />
            <div className="w-[2px] bg-[#555]" />
          </div>
          <TabBar />
        </main>
        <aside className="relative w-[39px] shrink-0 flex flex-col border-l border-[#cdcbc9]">
          {sidebar.map(([icon, label]) => (
            <button key={icon} aria-label={label} className="h-[29px] flex items-center justify-center">
              <Svg>{icons[icon]}</Svg>
            </button>
          ))}
          <button
            aria-label="Hide Sidebar"
            className="absolute left-0 top-1/2 -translate-y-1/2 w-[5px] h-[50px] bg-[#8c8f8e] flex items-center justify-center"
          >
            <svg viewBox="0 0 4 6" className="w-[3px] h-[5px]" fill="#fff" aria-hidden="true">
              <path d="M0 0l4 3-4 3z" />
            </svg>
          </button>
        </aside>
      </div>
      <StatusBar />
    </div>
  );
};

export default App;
